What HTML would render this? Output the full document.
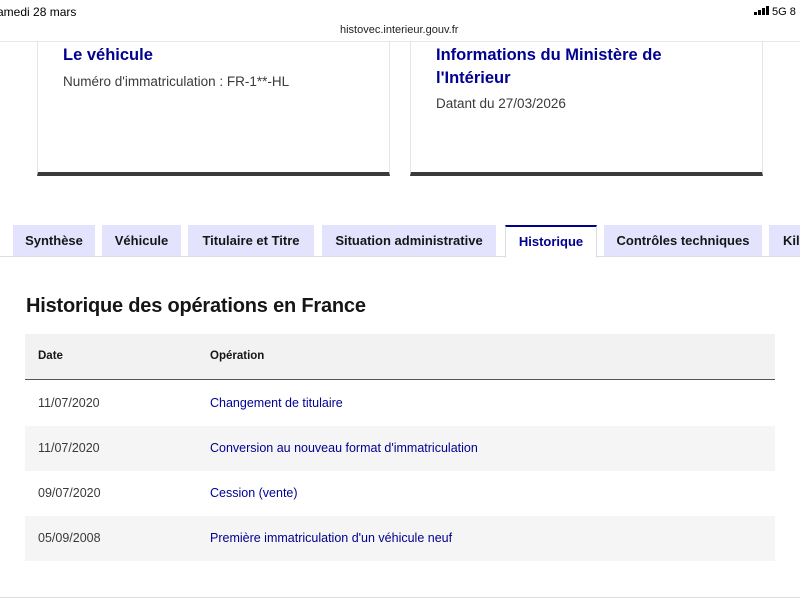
<!DOCTYPE html>
<html><head><meta charset="utf-8"><style>
*{margin:0;padding:0;box-sizing:border-box}
body{width:800px;height:600px;overflow:hidden;background:#fff;font-family:"Liberation Sans",sans-serif;color:#3a3a3a;position:relative}
.a{position:absolute;white-space:nowrap}
.card{position:absolute;top:42px;height:134px;border:1px solid #e5e5e5;border-top:none;border-bottom:4px solid #3a3a3a;background:#fff}
.ct{color:#000091;font-weight:bold;font-size:16.5px;line-height:23px}
.tab{position:absolute;top:225px;height:31px;background:#e3e3fd;color:#161616;font-weight:bold;font-size:13px;line-height:31px;text-align:center}
.panel{position:absolute;left:0;top:256px;width:800px;height:342px;border-top:1px solid #ddd;border-bottom:1px solid #ddd}
.row{position:absolute;left:25px;width:750px;height:45px;font-size:12.5px;line-height:45px}
.d{position:absolute;left:13px;color:#3a3a3a}
.o{position:absolute;left:185px;color:#000091}
</style></head><body>
<div class="a" style="left:-3px;top:5px;font-size:12px;color:#000">amedi 28 mars</div>
<div class="a" style="left:754px;top:6px;font-size:11px;color:#000;font-weight:bold">
<span style="display:inline-block;width:3px;height:3px;background:#000;margin-right:1px"></span><span style="display:inline-block;width:3px;height:5px;background:#000;margin-right:1px"></span><span style="display:inline-block;width:3px;height:7px;background:#000;margin-right:1px"></span><span style="display:inline-block;width:3px;height:9px;background:#000;margin-right:3px"></span><span style="font-weight:normal">5G 8</span></div>
<div class="a" style="left:340px;top:24px;font-size:11px;color:#222">histovec.interieur.gouv.fr</div>
<div class="a" style="left:0;top:41px;width:800px;height:1px;background:#e8e8e8"></div>

<div class="card" style="left:37px;width:353px">
 <div class="a ct" style="left:25px;top:2px">Le véhicule</div>
 <div class="a" style="left:25px;top:32px;font-size:13.5px">Numéro d'immatriculation : FR-1**-HL</div>
</div>
<div class="card" style="left:410px;width:353px">
 <div class="a ct" style="left:25px;top:2px">Informations du Ministère de<br>l'Intérieur</div>
 <div class="a" style="left:25px;top:54px;font-size:13.5px">Datant du 27/03/2026</div>
</div>

<div class="panel"></div>
<div class="tab" style="left:13px;width:82px">Synthèse</div>
<div class="tab" style="left:102px;width:79px">Véhicule</div>
<div class="tab" style="left:188px;width:126px">Titulaire et Titre</div>
<div class="tab" style="left:322px;width:174px">Situation administrative</div>
<div class="tab" style="left:505px;width:92px;background:#fff;color:#000091;border-top:2px solid #000091;height:33px;line-height:29px;border-left:1px solid #ddd;border-right:1px solid #ddd">Historique</div>
<div class="tab" style="left:604px;width:158px">Contrôles techniques</div>
<div class="tab" style="left:769px;width:40px;text-align:left;padding-left:14px">Kilo</div>

<div class="a" style="left:26px;top:295px;font-size:20px;color:#161616;font-weight:bold;letter-spacing:-0.2px">Historique des opérations en France</div>
<div class="row" style="top:334px;height:46px;background:#f2f2f2;border-bottom:1px solid #555;font-weight:bold;color:#161616;font-size:11.5px"><span class="d" style="color:#161616">Date</span><span class="o" style="color:#161616">Opération</span></div>
<div class="row" style="top:381px"><span class="d">11/07/2020</span><span class="o">Changement de titulaire</span></div>
<div class="row" style="top:426px;background:#f5f5f5"><span class="d">11/07/2020</span><span class="o">Conversion au nouveau format d'immatriculation</span></div>
<div class="row" style="top:471px"><span class="d">09/07/2020</span><span class="o">Cession (vente)</span></div>
<div class="row" style="top:516px;background:#f5f5f5"><span class="d">05/09/2008</span><span class="o">Première immatriculation d'un véhicule neuf</span></div>
</body></html>
